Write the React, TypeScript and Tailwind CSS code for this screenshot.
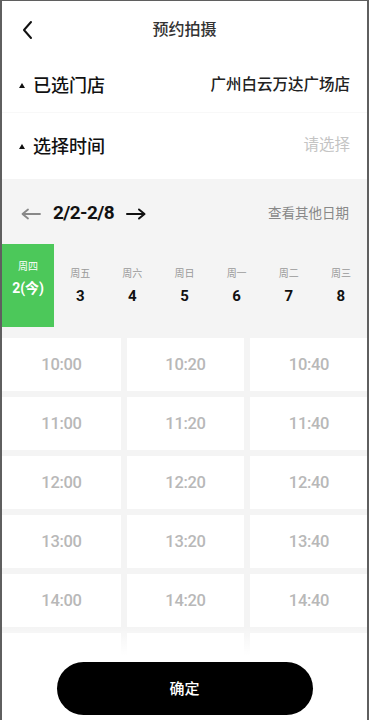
const days = [
  { w: "周四", d: "2(今)", active: true },
  { w: "周五", d: "3" },
  { w: "周六", d: "4" },
  { w: "周日", d: "5" },
  { w: "周一", d: "6" },
  { w: "周二", d: "7" },
  { w: "周三", d: "8" },
];

const times = [
  "10:00", "10:20", "10:40",
  "11:00", "11:20", "11:40",
  "12:00", "12:20", "12:40",
  "13:00", "13:20", "13:40",
  "14:00", "14:20", "14:40",
];

function Caret() {
  return <span className="mr-[8px] inline-block h-0 w-0 border-x-[3.5px] border-b-[5px] border-x-transparent border-b-[#111]" />;
}

export default function App() {
  return (
    <div
      className="relative h-[720px] w-[369px] overflow-hidden border-x-2 border-t border-[#5f5f5f] bg-white"
      style={{ fontFamily: "Roboto, 'Noto Sans CJK SC', sans-serif" }}
    >
      {/* header */}
      <div className="relative flex h-[58px] items-center justify-center">
        <svg className="absolute left-[19px] top-[19px]" width="14" height="20" viewBox="0 0 14 20" fill="none">
          <path d="M10 2 L3 10 L10 18" stroke="#111" strokeWidth="2" strokeLinecap="round" strokeLinejoin="round" />
        </svg>
        <span className="text-[16px] font-medium text-[#333]">预约拍摄</span>
      </div>

      {/* rows */}
      <div className="flex h-[54px] items-center justify-between border-b border-[#f8f8f8] pl-[17px] pr-[17px]">
        <div className="flex items-center text-[18px] font-medium text-[#111]">
          <Caret />
          已选门店
        </div>
        <span className="text-[15.5px] font-medium text-[#222]">广州白云万达广场店</span>
      </div>
      <div className="flex h-[66px] items-center justify-between pl-[17px] pr-[17px]">
        <div className="flex items-center text-[18px] font-medium text-[#111]">
          <Caret />
          选择时间
        </div>
        <span className="text-[15.5px] text-[#c4c4c4]">请选择</span>
      </div>

      {/* calendar */}
      <div className="bg-[#f4f4f4]">
        <div className="flex h-[65px] items-center justify-between pl-[19px] pr-[18px] pt-[4px]">
          <div className="flex items-center">
            <svg width="20" height="12" viewBox="0 0 20 12" fill="none">
              <path d="M19 6 H2 M7 1.5 L1.5 6 L7 10.5" stroke="#888" strokeWidth="1.8" strokeLinecap="round" strokeLinejoin="round" />
            </svg>
            <span className="ml-[12px] text-[19px] font-bold tracking-[-0.6px] text-[#111]">2/2-2/8</span>
            <svg className="ml-[12px]" width="20" height="12" viewBox="0 0 20 12" fill="none">
              <path d="M1 6 H18 M13 1.5 L18.5 6 L13 10.5" stroke="#111" strokeWidth="2" strokeLinecap="round" strokeLinejoin="round" />
            </svg>
          </div>
          <span className="text-[13.5px] text-[#888]">查看其他日期</span>
        </div>

        <div className="grid h-[83px] grid-cols-7">
          {days.map((d) =>
            d.active ? (
              <div key={d.w} className="flex flex-col items-center justify-center bg-[#4cc85a] pb-[14px]">
                <span className="text-[10px] text-white">{d.w}</span>
                <span className="mt-[4px] text-[14px] font-bold text-white">{d.d}</span>
              </div>
            ) : (
              <div key={d.w} className="flex flex-col items-center justify-center pt-[2px]">
                <span className="text-[10px] text-[#999]">{d.w}</span>
                <span className="mt-[4px] text-[15px] font-bold text-[#111]">{d.d}</span>
              </div>
            ),
          )}
        </div>

        <div className="relative h-[328px] overflow-hidden pt-[11px]">
          <div className="grid grid-cols-[119px_117px_118px] gap-x-[6px] gap-y-[6px]">
            {times.map((t) => (
              <div key={t} className="flex h-[53px] items-center justify-center bg-white pt-[2px]">
                <span className="text-[16.5px] font-medium tracking-[-0.3px] text-[#b8b8b8]">{t}</span>
              </div>
            ))}
            <div className="h-[53px] bg-white" />
            <div className="h-[53px] bg-white" />
            <div className="h-[53px] bg-white" />
          </div>
          <div className="absolute bottom-0 left-0 right-0 h-[28px] bg-gradient-to-b from-white/0 to-white" />
        </div>
      </div>

      {/* bottom */}
      <div className="flex h-[70px] justify-center bg-white pt-[7px]">
        <button className="h-[53px] w-[256px] rounded-full bg-black pt-[2px] text-[15px] font-medium text-white">确定</button>
      </div>
    </div>
  );
}
